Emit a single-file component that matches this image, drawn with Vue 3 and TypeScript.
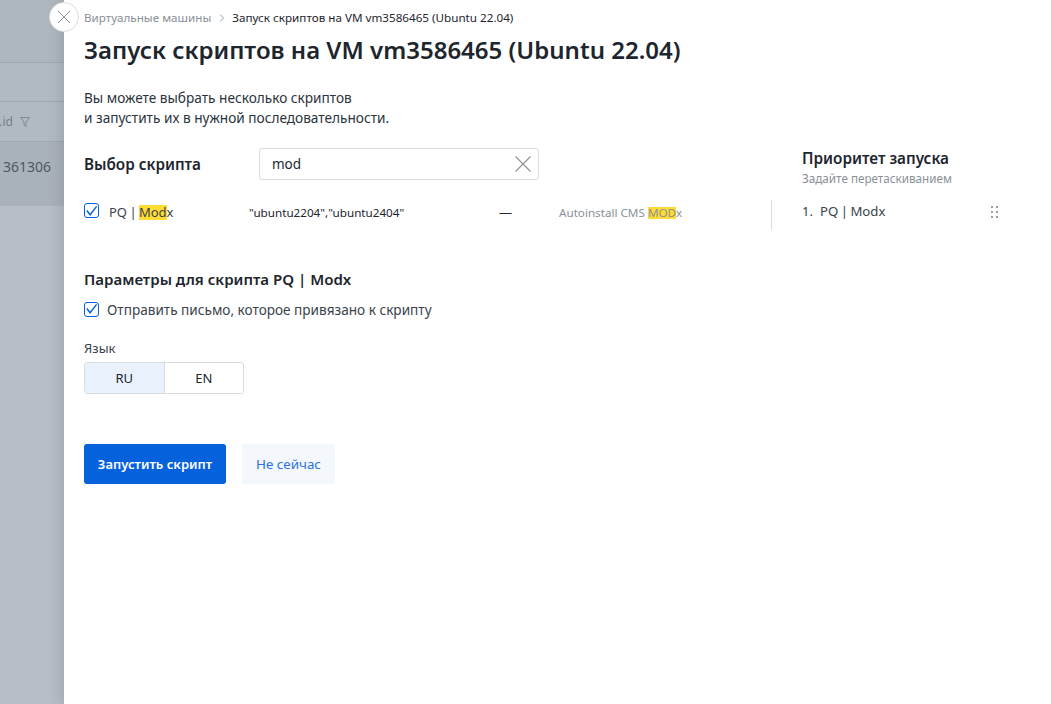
<script setup lang="ts">
const grips = [0, 1, 2, 3, 4, 5]
</script>

<template>
  <div class="page">
    <aside class="backdrop">
      <div class="bd-top"></div>
      <div class="bd-gap"></div>
      <div class="bd-head">
        <span>.id</span>
        <svg class="filter" width="10" height="10" viewBox="0 0 10 10" fill="none" stroke="#7f8a94" stroke-width="1"><path d="M.5.5h9L6 5v4.5L4 8V5z" /></svg>
      </div>
      <div class="bd-row">361306</div>
    </aside>
    <main class="panel">
      <button class="close" aria-label="close">
        <svg width="14" height="14" viewBox="0 0 14 14" stroke="#8f959b" stroke-width="1" fill="none"><path d="M1 1l12 12M13 1L1 13" /></svg>
      </button>
      <nav class="crumbs">
        <span class="crumb-link">Виртуальные машины</span>
        <svg width="6" height="8" viewBox="0 0 6 8" fill="none" stroke="#9aa0a6"><path d="M1 .5l3.5 3.5L1 7.5" /></svg>
        <span>Запуск скриптов на VM vm3586465 (Ubuntu 22.04)</span>
      </nav>
      <h1>Запуск скриптов на VM vm3586465 (Ubuntu 22.04)</h1>
      <p class="intro">Вы можете выбрать несколько скриптов<br />и запустить их в нужной последовательности.</p>

      <div class="select-wrap">
        <section class="select-main">
          <div class="search-line">
            <h2>Выбор скрипта</h2>
            <div class="search">
              <span>mod</span>
              <svg width="16" height="16" viewBox="0 0 16 16" fill="none" stroke="#8a8f94" stroke-width="1.1"><path d="M.5.5l15 15M15.5.5l-15 15" /></svg>
            </div>
          </div>
          <div class="script-row">
            <span class="check row-check"><svg width="14" height="12" viewBox="0 0 14 12" fill="none" stroke="#0561dc" stroke-width="1.6"><path d="M2 5.5L5.5 10L12.5 1" /></svg></span>
            <span class="name">PQ | <mark>Mod</mark>x</span>
            <span class="os">"ubuntu2204","ubuntu2404"</span>
            <span class="dash">—</span>
            <span class="desc">Autoinstall CMS <mark>MOD</mark>x</span>
          </div>
        </section>
        <section class="priority">
          <h3>Приоритет запуска</h3>
          <div class="hint">Задайте перетаскиванием</div>
          <div class="prio-item">
            <span class="prio-num">1.</span>
            <span class="prio-name">PQ | Modx</span>
            <span class="grip"><i v-for="g in grips" :key="g"></i></span>
          </div>
        </section>
      </div>

      <h3 class="params">Параметры для скрипта PQ | Modx</h3>
      <label class="send">
        <span class="check"><svg width="14" height="12" viewBox="0 0 14 12" fill="none" stroke="#0561dc" stroke-width="1.6"><path d="M2 5.5L5.5 10L12.5 1" /></svg></span>
        Отправить письмо, которое привязано к скрипту
      </label>
      <div class="lang-label">Язык</div>
      <div class="lang">
        <span class="on">RU</span>
        <span>EN</span>
      </div>
      <div class="actions">
        <button class="primary">Запустить скрипт</button>
        <button class="secondary">Не сейчас</button>
      </div>
    </main>
  </div>
</template>

<style>
html, body { margin: 0; background: #fff; }
</style>

<style scoped>
.page {
  display: flex;
  width: 1051px;
  height: 704px;
  overflow: hidden;
  font-family: "Noto Sans", sans-serif;
  color: #1d252d;
}
.backdrop {
  width: 64px;
  flex: none;
  background: #b7bec5;
  display: flex;
  flex-direction: column;
  color: #4b5862;
  font-size: 14px;
}
.bd-top { height: 62px; background: #afb7be; border-bottom: 1px solid #a0a8b0; }
.bd-gap { height: 38px; background: #b2bac1; border-bottom: 1px solid #a0a8b0; }
.bd-head { height: 39px; display: flex; align-items: center; justify-content: flex-end; gap: 7px; padding-right: 34px; border-bottom: 1px solid #a0a8b0; background: #b2bac1; font-size: 12px; color: #747f89; overflow: hidden; }
.filter { flex: none; }
.bd-head span { flex: none; }
.bd-row { height: 64px; background: #aab2b9; line-height: 50px; padding-left: 3px; white-space: nowrap; overflow: hidden; }
.panel {
  position: relative;
  flex: 1;
  background: #fff;
  box-shadow: -4px 0 12px rgba(40, 50, 60, .15);
  padding: 10px 0 0 20px;
}
.close {
  position: absolute;
  left: -15px;
  top: 2px;
  width: 30px;
  height: 30px;
  padding: 0;
  border-radius: 50%;
  border: 1px solid #dcdfe2;
  background: #fff;
  display: flex;
  align-items: center;
  justify-content: center;
}
.crumbs { display: flex; align-items: center; gap: 7.5px; font-size: 11.67px; line-height: 16px; color: #1d252d; }
.crumb-link { color: #8a9098; }
h1 { margin: 6px 0 0; font-size: 24px; line-height: 36px; font-weight: 600; }
.intro { margin: 20px 0 0; font-size: 13.65px; line-height: 20px; color: #2b333b; }
.select-wrap { display: flex; margin-top: 20px; }
.select-main { width: 687px; flex: none; }
.search-line { display: flex; align-items: center; height: 32px; }
h2 { margin: -1px 0 0; width: 175px; font-size: 15.25px; font-weight: 600; }
.search {
  box-sizing: border-box;
  width: 280px;
  height: 32px;
  border: 1px solid #d9dcdf;
  border-radius: 3px;
  display: flex;
  align-items: center;
  justify-content: space-between;
  padding: 0 7px 0 12px;
  font-size: 13.5px;
}
.script-row { display: flex; align-items: center; margin-top: 22px; font-size: 13px; height: 20px; }
.check {
  box-sizing: border-box;
  width: 15px;
  height: 15px;
  border: 1px solid #0561dc;
  border-radius: 3px;
  display: flex;
  align-items: center;
  justify-content: center;
  flex: none;
}
.row-check { margin-top: -3px; }
mark { display: inline-block; background: #ffdc33; color: inherit; line-height: 15px; }
.desc mark { line-height: 12px; }
.name { margin-left: 10px; width: 140px; color: #3a434b; word-spacing: -1px; }
.os { width: 250px; font-size: 11.67px; color: #1d252d; }
.dash { width: 60px; color: #1d252d; }
.desc { font-size: 11.67px; color: #8a9098; white-space: nowrap; }
.priority { flex: 1; padding-left: 31px; position: relative; }
h3 { margin: 0; font-size: 15.3px; font-weight: 600; line-height: 20px; }
.hint { font-size: 11.7px; line-height: 16px; color: #8a9098; margin-top: 2px; }
.prio-item {
  box-sizing: border-box;
  display: flex;
  align-items: flex-start;
  margin: 14px 0 0 -31px;
  padding-left: 30px;
  border-left: 1px solid #d9dcdf;
  font-size: 13px;
  line-height: 22px;
  width: 227px;
  height: 30px;
  color: #3a434b;
}
.prio-num { width: 18px; }
.prio-name { flex: 1; word-spacing: -1px; font-size: 13.2px; }
.grip { display: grid; grid-template-columns: 2px 2px; gap: 3px 3px; margin-top: 6px; }
.grip i { width: 2px; height: 2px; background: #9aa0a6; }
.params { margin-top: 39px; font-size: 15.05px; }
.send { display: flex; align-items: center; gap: 8px; margin-top: 10px; font-size: 13.6px; color: #3a434b; height: 20px; }
.lang-label { margin-top: 19px; font-size: 13px; line-height: 20px; color: #3a434b; }
.lang {
  display: flex;
  width: 160px;
  height: 32px;
  margin-top: 4px;
  box-sizing: border-box;
  border: 1px solid #d9dcdf;
  border-radius: 3px;
  font-size: 13px;
  overflow: hidden;
}
.lang span { flex: 1; display: flex; align-items: center; justify-content: center; }
.lang span.on { background: #e8f1fc; border-right: 1px solid #d9dcdf; }
.actions { display: flex; gap: 16px; margin-top: 50px; }
button { font-family: inherit; cursor: pointer; }
.actions button { height: 40px; border: 0; border-radius: 3px; font-size: 13px; }
.primary { width: 142px; background: #0561dc; color: #fff; font-weight: 600; }
.actions .secondary { width: 93px; background: #f4f7fc; color: #2a74db; font-size: 13.4px; }
</style>
